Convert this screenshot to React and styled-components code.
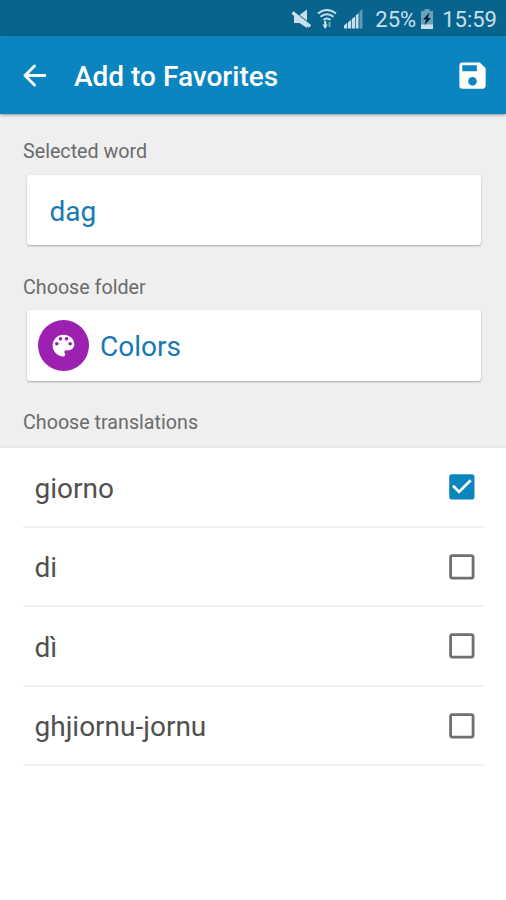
import React, { useState } from 'react';
import styled, { createGlobalStyle } from 'styled-components';
import { MdSave, MdCheckBox, MdCheckBoxOutlineBlank } from 'react-icons/md';

const GlobalStyle = createGlobalStyle`
  * {
    box-sizing: border-box;
  }

  body {
    margin: 0;
    background: #fff;
    font-family: Roboto, "Liberation Sans", sans-serif;
  }
`;

const Screen = styled.div`
  display: flex;
  flex-direction: column;
  width: 506px;
  height: 900px;
  overflow: hidden;
  background: #fff;
`;

const StatusBar = styled.div`
  display: flex;
  align-items: center;
  justify-content: flex-end;
  flex: none;
  height: 35.5px;
  padding: 3px 9px 0 0;
  background: #08648e;
  color: #c8e0eb;
  font-size: 22px;

  svg {
    display: block;
  }
`;

const StatusIcons = styled.div`
  display: flex;
  gap: 6px;
  margin-right: 12px;
`;

const BatteryLevel = styled.span`
  margin-right: 4px;
`;

const Clock = styled.span`
  margin-left: 8px;
`;

const AppBar = styled.header`
  display: flex;
  align-items: center;
  flex: none;
  height: 78.5px;
  padding: 1px 16px 0 17px;
  background: #0b85c0;
  color: #fff;
  box-shadow: 0 1px 3px rgba(0, 0, 0, 0.4);
  z-index: 1;
`;

const IconButton = styled.button`
  display: flex;
  padding: 0;
  border: 0;
  background: none;
  color: inherit;
  font-size: 35px;
`;

const Title = styled.h1`
  flex: 1;
  margin: 3px 0 0 22px;
  font-size: 28px;
  font-weight: 500;
  line-height: 32px;
`;

const Form = styled.section`
  flex: none;
  height: 334px;
  padding: 25px 25px 0 23px;
  background: #efefef;
  border-bottom: 2px solid #e8e8e8;
`;

const Label = styled.div`
  height: 24px;
  color: #6b6b6b;
  font-size: 19.7px;
  line-height: 25px;
`;

const Card = styled.div`
  display: flex;
  align-items: center;
  height: 70.5px;
  margin: 11.5px 0 29.5px 3.5px;
  padding-left: ${({ $inset }) => $inset}px;
  border-radius: 3px;
  background: #fff;
  box-shadow: 0 1px 2px rgba(0, 0, 0, 0.3);
  color: #1779b3;
  font-size: 28px;
`;

const CardText = styled.span`
  padding-top: 3px;
`;

const FolderIcon = styled.span`
  display: flex;
  align-items: center;
  justify-content: center;
  width: 51px;
  height: 51px;
  margin-right: 11px;
  border-radius: 50%;
  background: #9c21b0;
  color: #fff;
`;

const TranslationList = styled.ul`
  margin: 0;
  padding: 0 22px 0 23px;
  list-style: none;
`;

const TranslationRow = styled.li`
  display: flex;
  align-items: center;
  justify-content: space-between;
  height: 79.5px;
  padding: 1px 5.5px 0 11.5px;
  border-bottom: 2px solid #f0f0f0;
  color: #505050;
  font-size: 28px;
`;

const Word = styled.span`
  padding-top: 2px;
`;

const CheckButton = styled(IconButton)`
  color: ${({ $checked }) => ($checked ? '#0b85c0' : '#707070')};
  font-size: 33.7px;
`;

const BackIcon = () => (
  <svg
    width="35"
    height="35"
    viewBox="0 0 35 35"
    fill="none"
    stroke="currentColor"
    strokeWidth="2.900"
    strokeLinecap="round"
    strokeLinejoin="round"
  >
    <path d="M27.800 17.500H8M17.500 8L8 17.500l9.500 9.500" />
  </svg>
);

const PaletteIcon = () => (
  <svg width="29" height="29" viewBox="0 0 24 24" fill="currentColor">
    <path d="M12 3c-4.970 0-9 4.030-9 9s4.030 9 9 9c.83 0 1.500-.67 1.500-1.500 0-.39-.15-.74-.39-1.010-.23-.26-.38-.61-.38-.99 0-.83.67-1.500 1.500-1.500H16c2.760 0 5-2.240 5-5 0-4.420-4.030-8-9-8z" />
    <g fill="#9c21b0">
      <circle cx="6.500" cy="10.500" r="1.500" />
      <circle cx="9.500" cy="6.500" r="1.500" />
      <circle cx="14.500" cy="6.500" r="1.500" />
      <circle cx="17.500" cy="10.500" r="1.500" />
    </g>
  </svg>
);

const MuteIcon = () => (
  <svg width="20" height="20" viewBox="0 0 20 20" fill="currentColor">
    <path d="M3 6h5.500l7.500-5.500V19l-7.500-5H3z" />
    <path d="M3 2.500L20 15.500" fill="none" stroke="#08648e" strokeWidth="1.300" />
    <path d="M1.500 3.500L19 17.500" fill="none" stroke="currentColor" strokeWidth="3.500" />
  </svg>
);

const WifiIcon = () => (
  <svg width="20" height="20" viewBox="0 0 20 20" fill="none" stroke="currentColor" strokeWidth="2">
    <path d="M1 4.500Q10-2.500 19 4.500M3.500 7.800Q10 2.800 16.500 7.800M6.500 11Q10 8 13.500 11" />
    <path d="M8.200 18.500V12" strokeWidth="2.200" />
    <path d="M5.500 15.500L8.200 20l2.500-4.500z" fill="currentColor" stroke="none" />
    <path d="M12.500 13v5" strokeWidth="1.800" opacity="0.600" />
  </svg>
);

const SignalIcon = () => (
  <svg width="20" height="20" viewBox="0 0 20 20" fill="currentColor">
    <path d="M1 19.500v-3l3-2.500v5.500zM4.800 19.500v-6L8 11v8.500zM8.800 19.500V10L12 7.500v12zM12.800 19.500V6.500L15.500 4v15.500z" />
    <path d="M16.500 19.500V2.500L19.500 0v19.500z" opacity="0.450" />
  </svg>
);

const BatteryIcon = () => (
  <svg width="14" height="20" viewBox="0 0 14 20" fill="currentColor">
    <path d="M4.500 0h5v2H13v18H1V2h3.500z" opacity="0.500" />
    <path d="M1 15.500h12V20H1z" />
    <path d="M9.500 3.500L3 10.500h3L4.500 16l6.500-7H8z" fill="#06202e" />
  </svg>
);

const initialTranslations = [
  { word: 'giorno', checked: true },
  { word: 'di', checked: false },
  { word: 'dì', checked: false },
  { word: 'ghjiornu-jornu', checked: false },
];

const App = () => {
  const [translations, setTranslations] = useState(initialTranslations);

  const toggle = word => {
    setTranslations(translations.map(item => (
      item.word === word ? { ...item, checked: !item.checked } : item
    )));
  };

  return (
    <Screen>
      <GlobalStyle />
      <StatusBar>
        <StatusIcons>
          <MuteIcon />
          <WifiIcon />
          <SignalIcon />
        </StatusIcons>
        <BatteryLevel>25%</BatteryLevel>
        <BatteryIcon />
        <Clock>15:59</Clock>
      </StatusBar>
      <AppBar>
        <IconButton aria-label="Back"><BackIcon /></IconButton>
        <Title>Add to Favorites</Title>
        <IconButton aria-label="Save"><MdSave /></IconButton>
      </AppBar>
      <Form>
        <Label>Selected word</Label>
        <Card $inset={23}>
          <CardText>dag</CardText>
        </Card>
        <Label>Choose folder</Label>
        <Card $inset={11.5}>
          <FolderIcon><PaletteIcon /></FolderIcon>
          <CardText>Colors</CardText>
        </Card>
        <Label>Choose translations</Label>
      </Form>
      <TranslationList>
        {translations.map(({ word, checked }) => (
          <TranslationRow key={word}>
            <Word>{word}</Word>
            <CheckButton
              role="checkbox"
              aria-checked={checked}
              aria-label={word}
              $checked={checked}
              onClick={() => toggle(word)}
            >
              {checked ? <MdCheckBox /> : <MdCheckBoxOutlineBlank />}
            </CheckButton>
          </TranslationRow>
        ))}
      </TranslationList>
    </Screen>
  );
};

export default App;
